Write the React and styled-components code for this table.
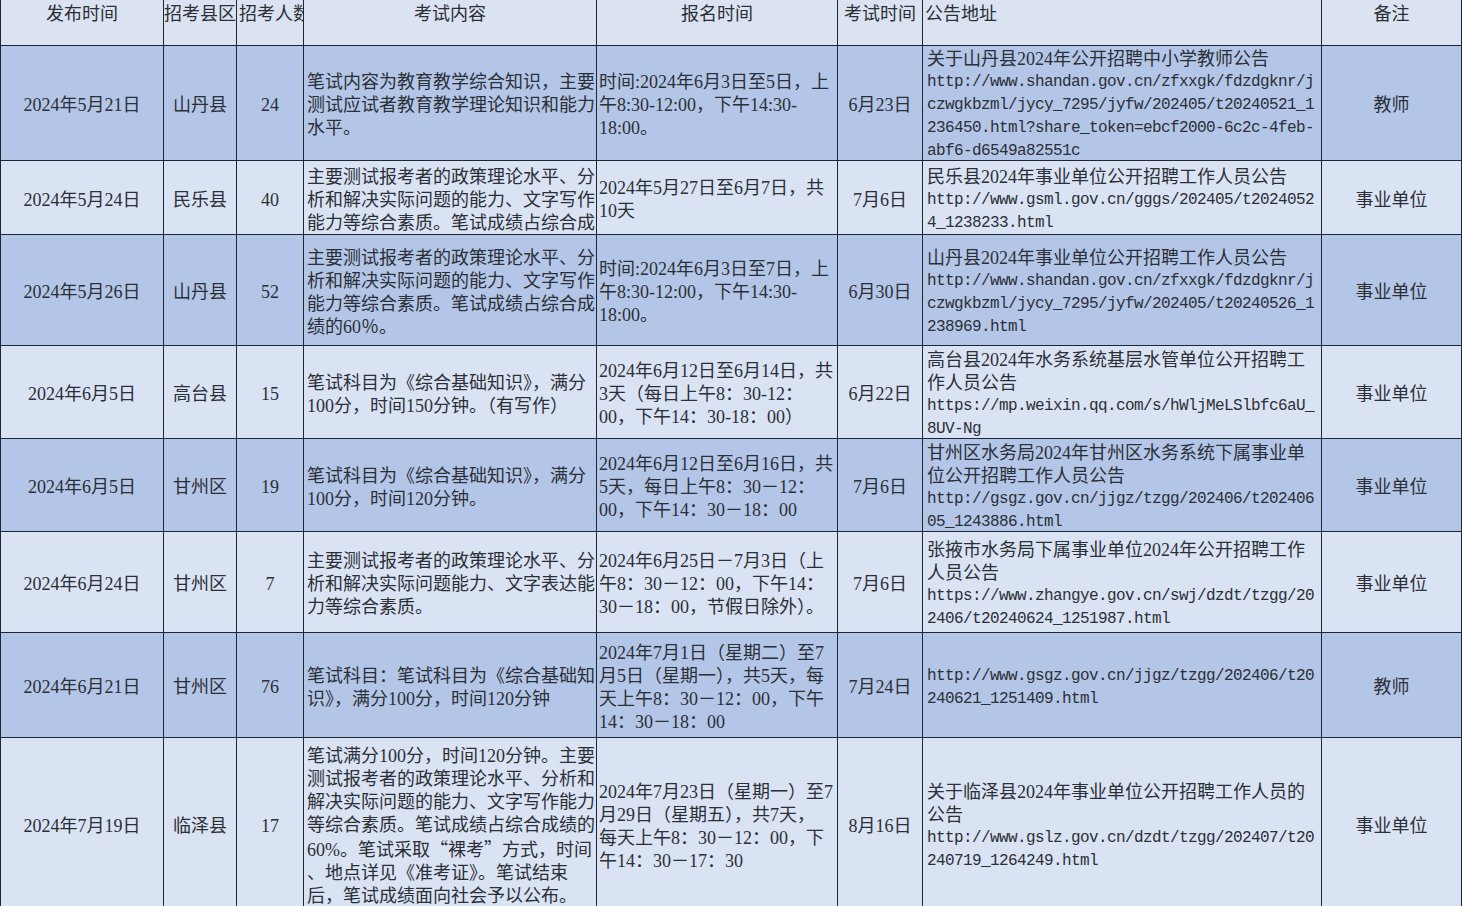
import React from 'react';
import styled, { createGlobalStyle } from 'styled-components';

const GlobalStyle = createGlobalStyle`
  html, body {
    margin: 0;
    padding: 0;
    overflow: hidden;
    background: #ffffff;
  }
`;

const columns = [164, 73, 67, 293, 241, 85, 399, 140];
const rowHeights = [46, 115, 74, 111, 93, 93, 101, 105, 173];

const headers = [
  { text: '发布时间', align: 'center' },
  { text: '招考县区', align: 'center' },
  { text: '招考人数', align: 'left' },
  { text: '考试内容', align: 'center' },
  { text: '报名时间', align: 'center' },
  { text: '考试时间', align: 'center' },
  { text: '公告地址', align: 'left' },
  { text: '备注', align: 'center' },
];

const Cjk = styled.span`
  font-family: "Noto Sans CJK SC", sans-serif;
`;

const rows = [
  {
    date: '2024年5月21日', county: '山丹县', count: '24',
    content: ['笔试内容为教育教学综合知识，主要', '测试应试者教育教学理论知识和能力', '水平。'],
    signup: ['时间:2024年6月3日至5日，上', '午8:30-12:00，下午14:30-', '18:00。'],
    exam: '6月23日',
    title: ['关于山丹县2024年公开招聘中小学教师公告'],
    url: ['http://www.shandan.gov.cn/zfxxgk/fdzdgknr/j', 'czwgkbzml/jycy_7295/jyfw/202405/t20240521_1', '236450.html?share_token=ebcf2000-6c2c-4feb-', 'abf6-d6549a82551c'],
    note: '教师',
  },
  {
    date: '2024年5月24日', county: '民乐县', count: '40',
    content: ['主要测试报考者的政策理论水平、分', '析和解决实际问题的能力、文字写作', '能力等综合素质。笔试成绩占综合成'],
    signup: ['2024年5月27日至6月7日，共', '10天'],
    exam: '7月6日',
    title: ['民乐县2024年事业单位公开招聘工作人员公告'],
    url: ['http://www.gsml.gov.cn/gggs/202405/t2024052', '4_1238233.html'],
    note: '事业单位',
  },
  {
    date: '2024年5月26日', county: '山丹县', count: '52',
    content: ['主要测试报考者的政策理论水平、分', '析和解决实际问题的能力、文字写作', '能力等综合素质。笔试成绩占综合成', '绩的60％。'],
    signup: ['时间:2024年6月3日至7日，上', '午8:30-12:00，下午14:30-', '18:00。'],
    exam: '6月30日',
    title: ['山丹县2024年事业单位公开招聘工作人员公告'],
    url: ['http://www.shandan.gov.cn/zfxxgk/fdzdgknr/j', 'czwgkbzml/jycy_7295/jyfw/202405/t20240526_1', '238969.html'],
    note: '事业单位',
  },
  {
    date: '2024年6月5日', county: '高台县', count: '15',
    content: ['笔试科目为《综合基础知识》，满分', '100分，时间150分钟。（有写作）'],
    signup: ['2024年6月12日至6月14日，共', '3天（每日上午8：30-12：', '00，下午14：30-18：00）'],
    exam: '6月22日',
    title: ['高台县2024年水务系统基层水管单位公开招聘工', '作人员公告'],
    url: ['https://mp.weixin.qq.com/s/hWljMeLSlbfc6aU_', '8UV-Ng'],
    note: '事业单位',
  },
  {
    date: '2024年6月5日', county: '甘州区', count: '19',
    content: ['笔试科目为《综合基础知识》，满分', '100分，时间120分钟。'],
    signup: ['2024年6月12日至6月16日，共', '5天，每日上午8：30－12：', '00，下午14：30－18：00'],
    exam: '7月6日',
    title: ['甘州区水务局2024年甘州区水务系统下属事业单', '位公开招聘工作人员公告'],
    url: ['http://gsgz.gov.cn/jjgz/tzgg/202406/t202406', '05_1243886.html'],
    note: '事业单位',
  },
  {
    date: '2024年6月24日', county: '甘州区', count: '7',
    content: ['主要测试报考者的政策理论水平、分', '析和解决实际问题能力、文字表达能', '力等综合素质。'],
    signup: ['2024年6月25日－7月3日（上', '午8：30－12：00，下午14：', '30－18：00，节假日除外）。'],
    exam: '7月6日',
    title: ['张掖市水务局下属事业单位2024年公开招聘工作', '人员公告'],
    url: ['https://www.zhangye.gov.cn/swj/dzdt/tzgg/20', '2406/t20240624_1251987.html'],
    note: '事业单位',
  },
  {
    date: '2024年6月21日', county: '甘州区', count: '76',
    content: ['笔试科目：笔试科目为《综合基础知', '识》，满分100分，时间120分钟'],
    signup: ['2024年7月1日（星期二）至7', '月5日（星期一），共5天，每', '天上午8：30－12：00，下午', '14：30－18：00'],
    exam: '7月24日',
    title: [],
    url: ['http://www.gsgz.gov.cn/jjgz/tzgg/202406/t20', '240621_1251409.html'],
    note: '教师',
  },
  {
    date: '2024年7月19日', county: '临泽县', count: '17',
    content: [
      '笔试满分100分，时间120分钟。主要',
      '测试报考者的政策理论水平、分析和',
      '解决实际问题的能力、文字写作能力',
      '等综合素质。笔试成绩占综合成绩的',
      <>60%。笔试采取<Cjk>“</Cjk>裸考<Cjk>”</Cjk>方式，时间</>,
      '、地点详见《准考证》。笔试结束',
      '后，笔试成绩面向社会予以公布。',
    ],
    signup: ['2024年7月23日（星期一）至7', '月29日（星期五），共7天，', '每天上午8：30－12：00，下', '午14：30－17：30'],
    exam: '8月16日',
    title: ['关于临泽县2024年事业单位公开招聘工作人员的', '公告'],
    url: ['http://www.gslz.gov.cn/dzdt/tzgg/202407/t20', '240719_1264249.html'],
    note: '事业单位',
  },
];

export default function App() {
  return (
    <>
      <GlobalStyle />
      <Sheet>
        {headers.map((h, i) => (
          <HeadCell key={h.text} $first={i === 0} $align={h.align}>
            <Line>{h.text}</Line>
          </HeadCell>
        ))}
        {rows.map((r, i) => {
          const dark = i % 2 === 0;
          return (
            <React.Fragment key={i}>
              <Cell $dark={dark} $first>
                <Line>{r.date}</Line>
              </Cell>
              <Cell $dark={dark}>
                <Line>{r.county}</Line>
              </Cell>
              <Cell $dark={dark}>
                <Line>{r.count}</Line>
              </Cell>
              <Cell $dark={dark} $align="left" $pad={3}>
                <Block>
                  {r.content.map((t, k) => <Line key={k}>{t}</Line>)}
                </Block>
              </Cell>
              <Cell $dark={dark} $align="left" $pad={2}>
                <Block>
                  {r.signup.map((t) => <Line key={t}>{t}</Line>)}
                </Block>
              </Cell>
              <Cell $dark={dark}>
                <Line>{r.exam}</Line>
              </Cell>
              <Cell $dark={dark} $align="left" $pad={4}>
                <Block>
                  {r.title.map((t) => <Line key={t}>{t}</Line>)}
                  {r.url.map((t) => <UrlLine key={t}>{t}</UrlLine>)}
                </Block>
              </Cell>
              <Cell $dark={dark}>
                <Line>{r.note}</Line>
              </Cell>
            </React.Fragment>
          );
        })}
      </Sheet>
    </>
  );
}

const Sheet = styled.div`
  display: grid;
  grid-template-columns: ${columns.map((c) => `${c}px`).join(' ')};
  grid-template-rows: ${rowHeights.map((h) => `${h}px`).join(' ')};
  width: 1462px;
  font-family: "Liberation Serif", "Noto Sans CJK SC", serif;
  font-size: 18px;
  line-height: 23px;
  color: #2b2f36;
`;

const Cell = styled.div`
  box-sizing: border-box;
  display: flex;
  align-items: center;
  justify-content: ${(p) => (p.$align === 'left' ? 'flex-start' : 'center')};
  padding-left: ${(p) => (p.$pad ? `${p.$pad}px` : '0')};
  padding-top: 5px;
  background: ${(p) => (p.$dark ? '#b4c6e7' : '#dae3f3')};
  border-right: 1.5px solid #1d2633;
  border-bottom: 1.5px solid #1d2633;
  border-left: ${(p) => (p.$first ? '1.5px solid #1d2633' : 'none')};
  overflow: hidden;
  white-space: nowrap;
`;

const HeadCell = styled(Cell)`
  align-items: flex-start;
  padding-top: 3px;
  padding-left: ${(p) => (p.$align === 'left' ? '2px' : '0')};
  background: #dbe3f2;
`;

const Block = styled.div`
  display: flex;
  flex-direction: column;
`;

const Line = styled.div`
  white-space: nowrap;
`;

const UrlLine = styled.div`
  white-space: nowrap;
  font-family: "Liberation Mono", monospace;
  font-size: 16px;
  letter-spacing: -0.6px;
`;
